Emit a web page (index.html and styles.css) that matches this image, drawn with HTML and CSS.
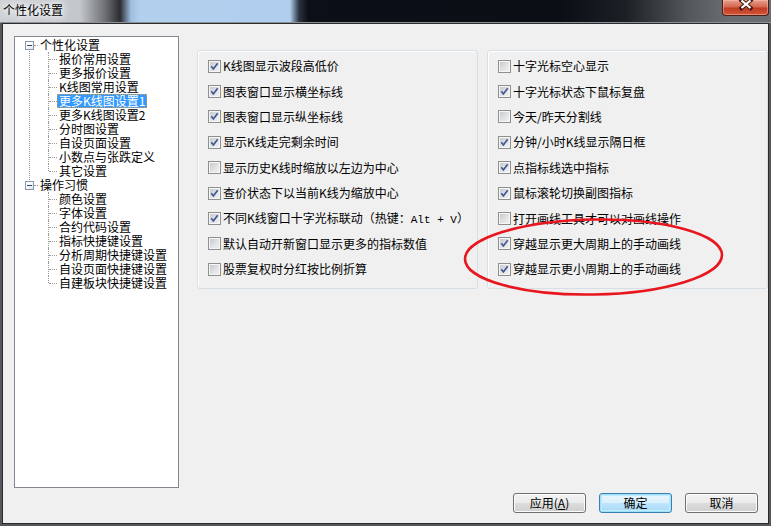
FILE: index.html
```html
<!DOCTYPE html>
<html lang="zh">
<head>
<meta charset="utf-8">
<title>个性化设置</title>
<link rel="stylesheet" href="styles.css">
</head>
<body>
<div class="titlebar">
  <span class="title">个性化设置</span>
  <span class="close"><svg width="47" height="16" viewBox="0 0 47 16"><path d="M19.5 1.5L28.5 9M28.5 1.5L19.5 9" stroke="#4a1a12" stroke-width="4.2" stroke-linecap="square" fill="none"/><path d="M19.5 1.5L28.5 9M28.5 1.5L19.5 9" stroke="#ffffff" stroke-width="2.2" fill="none"/></svg></span>
</div>
<div class="client">
  <div class="main">
    <div class="tree">
      <div class="node">
        <div class="row root"><span class="box"></span><span class="stub"></span><span class="label">个性化设置</span></div>
        <div class="children">
          <div class="row child"><span class="label">报价常用设置</span></div>
          <div class="row child"><span class="label">更多报价设置</span></div>
          <div class="row child"><span class="label">K线图常用设置</span></div>
          <div class="row child"><span class="label sel">更多K线图设置1</span></div>
          <div class="row child"><span class="label">更多K线图设置2</span></div>
          <div class="row child"><span class="label">分时图设置</span></div>
          <div class="row child"><span class="label">自设页面设置</span></div>
          <div class="row child"><span class="label">小数点与张跌定义</span></div>
          <div class="row child"><span class="label">其它设置</span></div>
        </div>
      </div>
      <div class="node">
        <div class="row root"><span class="box"></span><span class="stub"></span><span class="label">操作习惯</span></div>
        <div class="children">
          <div class="row child"><span class="label">颜色设置</span></div>
          <div class="row child"><span class="label">字体设置</span></div>
          <div class="row child"><span class="label">合约代码设置</span></div>
          <div class="row child"><span class="label">指标快捷键设置</span></div>
          <div class="row child"><span class="label">分析周期快捷键设置</span></div>
          <div class="row child"><span class="label">自设页面快捷键设置</span></div>
          <div class="row child"><span class="label">自建板块快捷键设置</span></div>
        </div>
      </div>
    </div>
    <div class="groups">
      <div class="group">
        <div class="opt"><span class="cb"><svg viewBox="0 0 11 11"><path d="M2.3 5.2L4.4 7.9L8.7 2.3"/></svg></span><span>K线图显示波段高低价</span></div>
        <div class="opt"><span class="cb"><svg viewBox="0 0 11 11"><path d="M2.3 5.2L4.4 7.9L8.7 2.3"/></svg></span><span>图表窗口显示横坐标线</span></div>
        <div class="opt"><span class="cb"><svg viewBox="0 0 11 11"><path d="M2.3 5.2L4.4 7.9L8.7 2.3"/></svg></span><span>图表窗口显示纵坐标线</span></div>
        <div class="opt"><span class="cb"><svg viewBox="0 0 11 11"><path d="M2.3 5.2L4.4 7.9L8.7 2.3"/></svg></span><span>显示K线走完剩余时间</span></div>
        <div class="opt"><span class="cb"></span><span>显示历史K线时缩放以左边为中心</span></div>
        <div class="opt"><span class="cb"><svg viewBox="0 0 11 11"><path d="M2.3 5.2L4.4 7.9L8.7 2.3"/></svg></span><span>查价状态下以当前K线为缩放中心</span></div>
        <div class="opt"><span class="cb"><svg viewBox="0 0 11 11"><path d="M2.3 5.2L4.4 7.9L8.7 2.3"/></svg></span><span>不同K线窗口十字光标联动（热键：<span class="mono">Alt + V</span>）</span></div>
        <div class="opt"><span class="cb"></span><span>默认自动开新窗口显示更多的指标数值</span></div>
        <div class="opt"><span class="cb"></span><span>股票复权时分红按比例折算</span></div>
      </div>
      <div class="group">
        <div class="opt"><span class="cb"></span><span>十字光标空心显示</span></div>
        <div class="opt"><span class="cb"><svg viewBox="0 0 11 11"><path d="M2.3 5.2L4.4 7.9L8.7 2.3"/></svg></span><span>十字光标状态下鼠标复盘</span></div>
        <div class="opt"><span class="cb"></span><span>今天/昨天分割线</span></div>
        <div class="opt"><span class="cb"><svg viewBox="0 0 11 11"><path d="M2.3 5.2L4.4 7.9L8.7 2.3"/></svg></span><span>分钟/小时K线显示隔日框</span></div>
        <div class="opt"><span class="cb"><svg viewBox="0 0 11 11"><path d="M2.3 5.2L4.4 7.9L8.7 2.3"/></svg></span><span>点指标线选中指标</span></div>
        <div class="opt"><span class="cb"><svg viewBox="0 0 11 11"><path d="M2.3 5.2L4.4 7.9L8.7 2.3"/></svg></span><span>鼠标滚轮切换副图指标</span></div>
        <div class="opt"><span class="cb"></span><span>打开画线工具才可以对画线操作</span></div>
        <div class="opt"><span class="cb"><svg viewBox="0 0 11 11"><path d="M2.3 5.2L4.4 7.9L8.7 2.3"/></svg></span><span>穿越显示更大周期上的手动画线</span></div>
        <div class="opt"><span class="cb"><svg viewBox="0 0 11 11"><path d="M2.3 5.2L4.4 7.9L8.7 2.3"/></svg></span><span>穿越显示更小周期上的手动画线</span></div>
      </div>
    </div>
  </div>
  <div class="buttons">
    <button class="btn">应用(<u>A</u>)</button>
    <button class="btn default">确定</button>
    <button class="btn">取消</button>
  </div>
</div>
<svg class="annot" viewBox="0 0 771 526"><ellipse cx="593.5" cy="257" rx="128.5" ry="37.5" transform="rotate(-1 593.5 257)" fill="none" stroke="#e8161e" stroke-width="2.6"/></svg>
</body>
</html>
```
FILE: styles.css
```css
* { box-sizing: border-box; }

body {
  margin: 0;
  width: 771px;
  height: 526px;
  overflow: hidden;
  position: relative;
  background: #55585b;
  font-family: "Noto Sans CJK SC", "Noto Sans", sans-serif;
  font-size: 12px;
  color: #000;
}

.titlebar {
  height: 23px;
  display: flex;
  align-items: flex-start;
  background: linear-gradient(to right,
    #cfd3d7 0px, #c3c7cb 80px, #6a6c6f 106px, #2a2c30 120px,
    #9fbfe0 131px, #b2d0ee 140px, #b0cfee 290px, #2c3340 299px,
    #0c0f17 308px, #0b0e15 560px, #1c1f24 625px, #55585c 690px, #6b6e71 730px);
  border-bottom: 1px solid #8c9094;
}

.title {
  margin: 3px 0 0 3px;
  line-height: 14px;
  font-size: 12px;
  text-shadow: 0 0 4px #fff, 0 0 8px #fff, 0 0 12px rgba(255,255,255,.8);
}

.close {
  margin-left: auto;
  margin-right: 2px;
  width: 47px;
  height: 16px;
  border: 1px solid #4b2018;
  border-top: none;
  border-radius: 0 0 4px 4px;
  background: linear-gradient(to bottom, #e9a08f 0%, #d4674f 45%, #c23a22 55%, #d0583c 100%);
  box-shadow: inset 0 0 0 1px rgba(255,200,180,.45);
  overflow: hidden;
}
.close svg { display: block; margin: -1px 0 0 -1px; }

.client {
  margin-left: 2px;
  width: 767px;
  height: 501px;
  border: 1px solid #2a2c2e;
  background: #f0f0f0;
}

.main {
  display: flex;
  align-items: flex-start;
  padding: 12px 0 0 11px;
}

/* tree */
.tree {
  width: 165px;
  height: 452px;
  border: 1px solid #828790;
  background: #fff;
  padding-top: 1px;
}
.node { position: relative; }
.node:not(:last-child)::before {
  content: "";
  position: absolute;
  left: 14px;
  top: 11px;
  bottom: -4px;
  border-left: 1px dotted #9a9a9a;
}
.row {
  position: relative;
  height: 14px;
  line-height: 14px;
  display: flex;
  align-items: center;
  white-space: nowrap;
}
.root { padding-left: 10px; }
.box {
  position: relative;
  z-index: 1;
  width: 9px;
  height: 9px;
  border: 1px solid #8a98ac;
  background: linear-gradient(135deg, #ffffff 30%, #dfe3e8);
}
.box::after {
  content: "";
  position: absolute;
  left: 1px;
  top: 3px;
  width: 5px;
  height: 1px;
  background: #2c4a7e;
}
.stub {
  width: 4px;
  border-top: 1px dotted #9a9a9a;
}
.label {
  height: 14px;
  line-height: 14px;
  padding: 0 2px;
}
.child { padding-left: 42px; }
.child::before {
  content: "";
  position: absolute;
  left: 33px;
  top: 0;
  bottom: 0;
  border-left: 1px dotted #9a9a9a;
}
.child:last-child::before { bottom: 7px; }
.child::after {
  content: "";
  position: absolute;
  left: 34px;
  top: 7px;
  width: 8px;
  border-top: 1px dotted #9a9a9a;
}
.sel {
  background: #3399ff;
  color: #fff;
  outline: 1px dotted #d49a45;
  outline-offset: -1px;
}

/* option groups */
.groups {
  display: flex;
  gap: 9px;
  margin: 14px 0 0 18px;
}
.group {
  width: 281px;
  height: 239px;
  border: 1px solid #d5dfe5;
  border-radius: 3px;
  box-shadow: inset 1px 1px 0 #fff;
  padding: 2.5px 0 0 10px;
}
.opt {
  height: 25.4px;
  display: flex;
  align-items: center;
  gap: 2px;
  white-space: nowrap;
  line-height: 14px;
}
.cb {
  flex: none;
  width: 13px;
  height: 13px;
  border: 1px solid #8e8f8f;
  background: linear-gradient(135deg, #c2c5c9 0%, #e4e5e7 60%, #f3f3f3 100%);
  box-shadow: inset 0 0 0 1px #f6f6f6;
}
.cb svg {
  display: block;
  width: 11px;
  height: 11px;
}
.cb path {
  fill: none;
  stroke: #3f5696;
  stroke-width: 1.7;
}
.mono {
  font-family: "Liberation Mono", "DejaVu Sans Mono", monospace;
  font-size: 11px;
}

/* buttons */
.buttons {
  display: flex;
  justify-content: flex-end;
  gap: 13px;
  margin-top: 5px;
  padding-right: 10px;
}
.btn {
  width: 73px;
  height: 20px;
  padding: 0;
  margin: 0;
  font-family: "Noto Sans CJK SC", "Noto Sans", sans-serif;
  font-size: 12px;
  line-height: 16px;
  color: #000;
  border: 1px solid #707070;
  border-radius: 3px;
  background: linear-gradient(to bottom, #f2f2f2 0%, #ebebeb 50%, #dddddd 50%, #cfcfcf 100%);
  box-shadow: inset 0 0 0 1px #fcfcfc;
}
.btn u { text-decoration: underline; }
.btn.default {
  border-color: #3c7fb1;
  background: linear-gradient(to bottom, #eaf6fd 0%, #d9f0fc 50%, #bee6fd 50%, #a7d9f5 100%);
  box-shadow: inset 0 0 0 1px #48d7fb55, inset 0 0 0 2px #c4e9fb;
}

.annot {
  position: absolute;
  left: 0;
  top: 0;
  width: 771px;
  height: 526px;
  pointer-events: none;
}
```
